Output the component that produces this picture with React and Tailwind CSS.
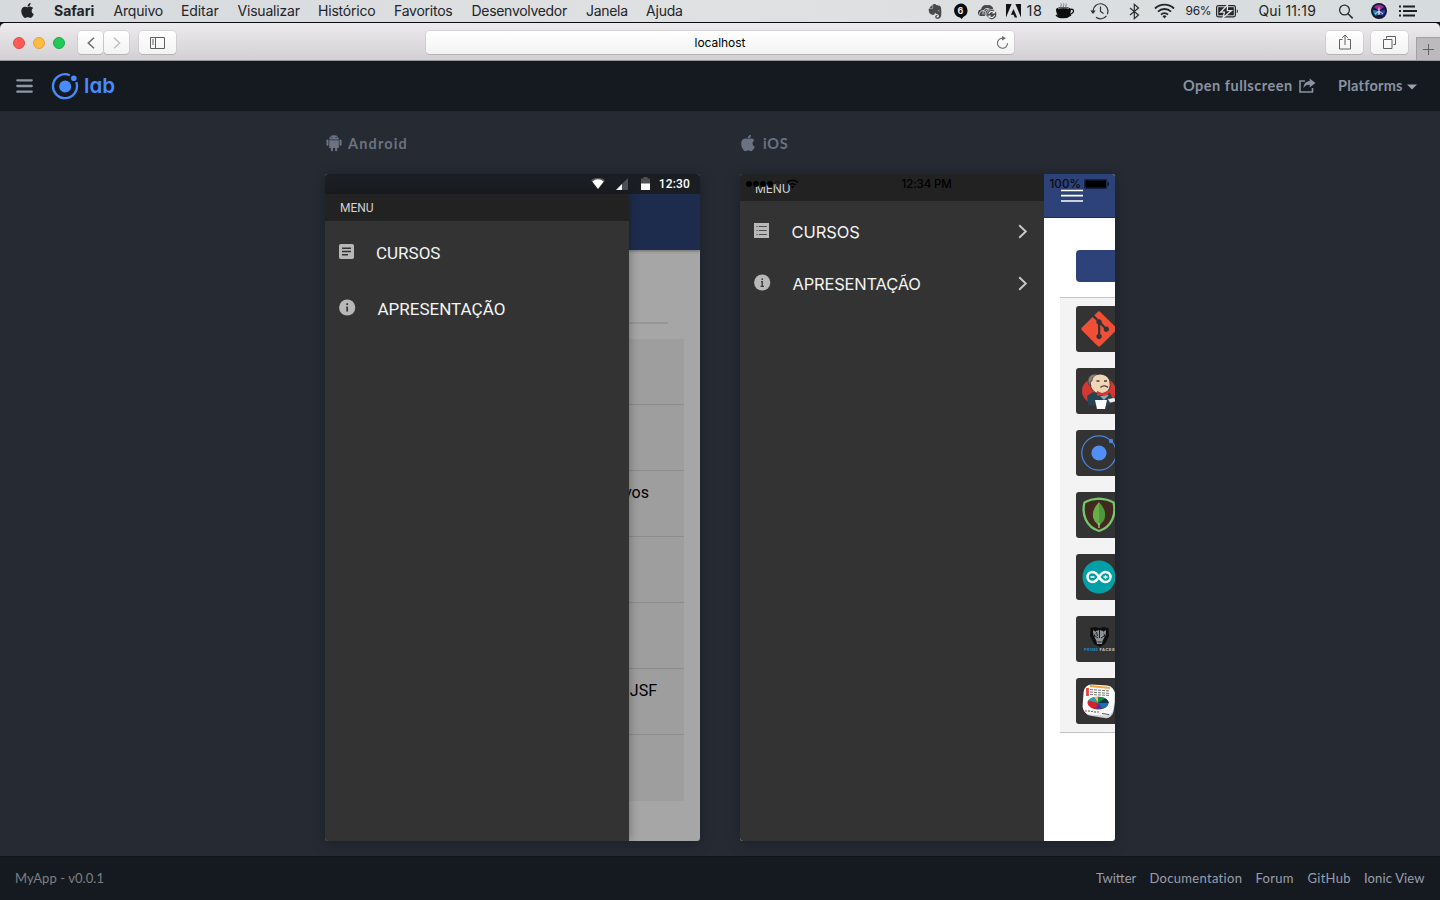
import React from "react";
import { FaApple, FaEvernote, FaGitAlt } from "react-icons/fa";
import { IoLogoAndroid, IoLogoApple } from "react-icons/io";

const menus = [
  ["Safari", "w-[59.5px] font-bold tracking-[0px]"],
  ["Arquivo", "w-[67.5px] tracking-[-0.2px]"],
  ["Editar", "w-[56.5px] tracking-[-0.1px]"],
  ["Visualizar", "w-[80.5px] tracking-[-0.2px]"],
  ["Histórico", "w-[76px] tracking-[-0.2px]"],
  ["Favoritos", "w-[77.5px] tracking-[-0.25px]"],
  ["Desenvolvedor", "w-[114.5px] tracking-[-0.3px]"],
  ["Janela", "w-[60px] tracking-[-0.3px]"],
  ["Ajuda", "w-[60px] tracking-[-0.2px]"],
];

function StatusIcons() {
  return (
    <div className="flex h-[22px] items-center">
      <FaEvernote className="mr-[10px] h-[17px] w-[16px] text-[#48494b]" />
      <svg className="mr-[9px] h-[18px] w-[15px]" viewBox="0 0 15 18">
        <path d="M7.5 1.5a7 7 0 0 1 3 13.3L8.7 17 7 15.4A7 7 0 0 1 7.500 1.500z" fill="#0b0c0e" />
        <text x="7.500" y="11.500" fontSize="9" fontWeight="700" textAnchor="middle" fill="#e6e7e9" fontFamily="Inter, sans-serif">6</text>
      </svg>
      <svg className="mr-[9px] h-[17px] w-[20px]" viewBox="0 0 20 17">
        <path d="M3.500 13a3.300 3.300 0 0 1 .5-6.500C4.500 3.500 7 1.500 10 2.200c3-.8 6 1 6.300 4.200v6.600z" fill="#45474a" />
        <path d="M2.500 11.500C2.500 7.500 7 6.500 8.500 9M6 11.500C5.500 6.500 9 4.500 12.500 6M8.500 13c-1-3 0-6 3-6.500" fill="none" stroke="#d9dcde" strokeWidth="1" />
        <circle cx="14.700" cy="11.500" r="5" fill="#45474a" stroke="#d9dcde" strokeWidth=".8" />
        <path d="M11.800 11a3 3 0 0 1 5.200-1.500M17.600 12a3 3 0 0 1-5.200 1.500M17.400 8v2h-2M12 15v-2h2" fill="none" stroke="#eceeef" strokeWidth="1.100" />
      </svg>
      <svg className="h-[14px] w-[15px]" viewBox="0 0 15 14">
        <path d="M0 0h5.600L0 13.500zM9.400 0H15v13.500zM7.500 5l3.700 8.500H8.700l-1.100-2.700H4.900z" fill="#111214" />
      </svg>
      <span className="ml-[6px] w-[28px] text-[14.500px] tracking-[.6px]">18</span>
      <svg className="mr-[15px] h-[18px] w-[20px]" viewBox="0 0 20 18">
        <path d="M6 5C5 3.500 7 3 6 1.500M8.500 5c-1-1.500 1-2 0-3.500M11 5c-1-1.500 1-2 0-3.500" fill="none" stroke="#77797c" strokeWidth="1" />
        <path d="M1 7.500c0-3.500 15-3.500 15 0 0 3.500-2 7-4 8h-7C3 14.500 1 11 1 7.500z" fill="#0b0c0e" />
        <path d="M3 6.800c2-1.300 9-1.300 11 0" stroke="#aeb1b4" strokeWidth=".8" fill="none" />
        <path d="M15.500 7.500c4-1.500 4.500 4-1.500 5M1 13c3 3.500 11 3.500 15 0" stroke="#0b0c0e" strokeWidth="1.300" fill="none" />
      </svg>
      <svg className="mr-[19px] h-[18px] w-[20px]" viewBox="0 0 20 18">
        <path d="M3 9a7.500 7.500 0 1 1 3 6.300" fill="none" stroke="#2f3134" strokeWidth="1.200" strokeDasharray="26 2 30" />
        <path d="M.3 8.500h5.400L3 12z" fill="#2f3134" />
        <path d="M10.500 4.500V9.500L13.500 11.500" fill="none" stroke="#2f3134" strokeWidth="1.200" />
      </svg>
      <svg className="mr-[14px] h-[17px] w-[11px]" viewBox="0 0 11 17">
        <path d="M1 5l8.500 7-4.200 3.700V1.300L9.500 5 1 12" fill="none" stroke="#2b2d30" strokeWidth="1.200" />
      </svg>
      <svg className="mr-[11px] h-[16px] w-[21px]" viewBox="0 0 21 16">
        <path d="M1 5.500a13.500 13.500 0 0 1 19 0M4 8.700a9.200 9.200 0 0 1 13 0M7 11.600a5 5 0 0 1 7 0" fill="none" stroke="#24262a" strokeWidth="1.900" />
        <path d="M10.500 15.500L8.500 13.300a2.800 2.800 0 0 1 4 0z" fill="#24262a" />
      </svg>
      <span className="w-[30px] text-[12px] tracking-[-0.3px]">96%</span>
      <svg className="mr-[20px] h-[13px] w-[23px]" viewBox="0 0 23 13">
        <rect x=".6" y=".6" width="18.800" height="11.300" rx="1.800" fill="none" stroke="#24262a" strokeWidth="1.200" />
        <rect x="2.200" y="2.200" width="15.600" height="8.100" fill="#24262a" />
        <path d="M11.500 0L4.500 7.200h4L7 12.800 15.500 5.600h-4.200z" fill="#24262a" stroke="#dfe2e4" strokeWidth="1.300" />
        <path d="M20.800 4.300c1.500.5 1.500 3.400 0 4z" fill="#24262a" />
      </svg>
      <span className="w-[79.500px] whitespace-nowrap text-[14px] tracking-[0.15px]">Qui 11:19</span>
      <svg className="mr-[17px] h-[15px] w-[16px]" viewBox="0 0 16 15">
        <circle cx="6.500" cy="6" r="4.900" fill="none" stroke="#2b2d30" strokeWidth="1.300" />
        <path d="M10 9.700l4.700 4.700" stroke="#2b2d30" strokeWidth="1.600" />
      </svg>
      <svg className="mr-[12px] h-[16px] w-[16px]" viewBox="0 0 16 16">
        <circle cx="8" cy="8" r="8" fill="#15163a" />
        <path d="M3 4a6.500 6.500 0 0 1 10 0L8 8z" fill="#a02896" />
        <path d="M2 7l6 1-3 5A7 7 0 0 1 2 7z" fill="#1590b4" />
        <path d="M14 7L8 8l3 5a7 7 0 0 0 3-6z" fill="#3049b4" />
        <path d="M8 4.500v3.500l4 3M8 8l-4 3M8 8l-1 4M8 8l1 4" stroke="#d5dcff" strokeWidth="1" fill="none" />
      </svg>
      <svg className="h-[12px] w-[18px]" viewBox="0 0 18 12">
        <path d="M0 1.500h2M0 6h2M0 10.500h2M4 1.500h12M4 6h14M4 10.500h12" stroke="#1d1f22" strokeWidth="1.800" />
      </svg>
    </div>
  );
}

function MenuBar() {
  return (
    <div className="flex h-[23px] items-start justify-between border-b border-[#0b0d10] bg-gradient-to-r from-[#d6dadd] via-[#e0e1e2] to-[#d6dcde] pr-[23px] pl-[20px] text-[14px] leading-[22px] text-[#222428]">
      <div className="flex h-[22px] items-center">
        <FaApple className="mr-[19px] mb-[2px] h-[17px] w-[15px]" />
        {menus.map(([name, cls]) => (
          <span key={name} className={"whitespace-nowrap " + cls}>{name}</span>
        ))}
      </div>
      <StatusIcons />
    </div>
  );
}

const toolButton = "flex h-[23px] items-center justify-center rounded-[4px] bg-gradient-to-b from-white to-[#f3f3f3] shadow-[0_0_0_0.5px_#c2c0c2,0_1px_0_#aaa8aa]";

function Toolbar() {
  return (
    <div className="bg-[#15191f]">
      <div className="flex h-[38px] items-start rounded-t-[5px] border-b border-[#989698] bg-gradient-to-b from-[#edebed] to-[#d3d0d3] pl-[13px]">
        <div className="flex w-[413px] items-center pt-[8px]">
          <div className="flex gap-[8px]">
            <div className="h-[12px] w-[12px] rounded-full border border-[#e14b4b] bg-[#fc5b57]" />
            <div className="h-[12px] w-[12px] rounded-full border border-[#e0a13c] bg-[#fdbc40]" />
            <div className="h-[12px] w-[12px] rounded-full border border-[#14ae46] bg-[#1fca57]" />
          </div>
          <div className={"ml-[13px] w-[25px] " + toolButton}>
            <svg className="h-[12px] w-[8px]" viewBox="0 0 8 12"><path d="M7 .8L1.300 6 7 11.200" fill="none" stroke="#6c6c6c" strokeWidth="1.500" /></svg>
          </div>
          <div className={"ml-px w-[25px] " + toolButton}>
            <svg className="h-[12px] w-[8px]" viewBox="0 0 8 12"><path d="M1 .8L6.700 6 1 11.200" fill="none" stroke="#bcbcbc" strokeWidth="1.300" /></svg>
          </div>
          <div className={"ml-[10px] w-[37px] " + toolButton}>
            <svg className="h-[12px] w-[15px]" viewBox="0 0 15 12"><path d="M.5.5h14v11H.5zM5.500.5v11M2 3h2M2 5h2M2 7h2" fill="none" stroke="#606060" /></svg>
          </div>
        </div>
        <div className={"mt-[8px] w-[588px] " + toolButton}>
          <span className="ml-auto pl-[18px] text-[12px] leading-[23px] tracking-[-0.05px] text-black">localhost</span>
          <svg className="mr-[5px] ml-auto h-[14px] w-[13px]" viewBox="0 0 13 14">
            <path d="M11.600 7.300a5.100 5.100 0 1 1-5-5.200" fill="none" stroke="#6b6b6b" strokeWidth="1.100" />
            <path d="M6 0l4 2.300L6 4.600z" fill="#6b6b6b" />
          </svg>
        </div>
        <div className="ml-auto flex items-start">
          <div className={"mt-[8px] w-[37px] " + toolButton}>
            <svg className="mb-[2px] h-[16px] w-[12px]" viewBox="0 0 12 16"><path d="M3.500 5.500h-3v9.500h11V5.500h-3M6 11V1M3.200 3.700L6 1l2.800 2.700" fill="none" stroke="#606060" /></svg>
          </div>
          <div className={"mt-[8px] mr-[8px] ml-[8px] w-[37px] " + toolButton}>
            <svg className="mb-px h-[13px] w-[13px]" viewBox="0 0 13 13"><path d="M.5 3.500h8.500v9H.5zM3.500 2.500v-2h9v8h-2" fill="none" stroke="#606060" /></svg>
          </div>
          <div className="mt-[14px] flex h-[23px] w-[24px] items-center justify-center border-t border-l border-[#a3a1a3] bg-[#bcbabc]">
            <svg className="h-[11px] w-[11px]" viewBox="0 0 11 11"><path d="M5.500 0v11M0 5.500h11" stroke="#646264" /></svg>
          </div>
        </div>
      </div>
    </div>
  );
}

function LabHeader() {
  return (
    <header className="flex h-[50px] items-center justify-between bg-[#151a21] pr-[23px] pl-[16px] font-['Lato',sans-serif] text-[14.500px] leading-[20px] font-bold text-[#8b92a0]">
      <div className="flex items-center">
        <svg className="h-[14px] w-[17px]" viewBox="0 0 17 14"><path d="M1.300 1.300h14.400M1.300 7h14.400M1.300 12.700h14.400" stroke="#9096a4" strokeWidth="2.300" strokeLinecap="round" /></svg>
        <svg className="ml-[18px] h-[28px] w-[28px]" viewBox="0 0 28 28">
          <path d="M18.800 3.200A12 12 0 1 0 25.300 10.200" fill="none" stroke="#4a8bfc" strokeWidth="2.300" />
          <circle cx="14.200" cy="14.500" r="6" fill="#4a8bfc" />
          <circle cx="22.800" cy="6.300" r="2.800" fill="#4a8bfc" />
        </svg>
        <span className="ml-[5px] font-['Inter',sans-serif] text-[20.500px] leading-[28px] font-semibold tracking-[0.1px] text-[#4a8bfc] [font-feature-settings:'cv11']">lab</span>
      </div>
      <div className="flex items-center whitespace-nowrap">
        <span className="mb-px w-[116px] tracking-[0.5px]">Open fullscreen</span>
        <svg className="mr-[22px] mb-[2px] h-[15px] w-[17px]" viewBox="0 0 17 15">
          <path d="M6 3H1v11h12.500v-4" fill="none" stroke="#8b92a0" strokeWidth="1.600" />
          <path d="M10.700.5L16.500 5l-5.800 4.500V6.700C7.500 6.500 6 7.700 4.500 10c.2-4 2.500-6.600 6.200-6.900z" fill="#8b92a0" />
        </svg>
        <span className="mb-px w-[69px] tracking-[0.25px]">Platforms</span>
        <svg className="mt-[2px] h-[6px] w-[10px]" viewBox="0 0 10 6"><path d="M0 .5h10L5 5.500z" fill="#9aa0ad" /></svg>
      </div>
    </header>
  );
}

function AndroidPhone() {
  const rows = ["", "", "vos", "", "", "JSF", ""];
  return (
    <div className="h-[667px] w-[375px] overflow-hidden rounded-[3px] bg-[#a6a6a6] font-['Roboto',sans-serif] shadow-[0_2px_14px_rgba(0,0,0,0.25)]">
      <div className="flex h-[20px] items-center justify-end bg-[#1a1e22] pr-[10px] text-white">
        <svg className="mr-[11px] mb-px h-[11px] w-[14px]" viewBox="0 0 14 11">
          <path d="M0 2.300a11 11 0 0 1 14 0L7 11z" fill="#55585c" />
          <path d="M1.300 3.500a9.500 9.500 0 0 1 11.400 0L7 11z" fill="#fff" />
        </svg>
        <svg className="mr-[13px] h-[12px] w-[12px]" viewBox="0 0 12 12"><path d="M12 0v12H0z" fill="#4e5154" /><path d="M6 6v6H0z" fill="#fff" /></svg>
        <svg className="mr-[9px] mb-px h-[13px] w-[9px]" viewBox="0 0 9 13"><path d="M0 1.500h2.500V0h4v1.500H9V13H0z" fill="#4e5154" /><path d="M0 6.500h9V13H0z" fill="#fff" /></svg>
        <span className="text-[12px] leading-[20px] font-medium tracking-[0.15px]">12:30</span>
      </div>
      <div className="flex h-[647px]">
        <div className="relative z-10 w-[304px] shrink-0 bg-[#333] text-[#f4f4f4] shadow-[0_0_10px_rgba(0,0,0,0.35)]">
          <div className="h-[27px] bg-[#222] pl-[15px] text-[12px] leading-[28px] text-[#d3d3d3]">MENU</div>
          <div className="mt-[4px] flex h-[56px] items-center pl-[14px]">
            <svg className="mr-[22px] mb-[3px] h-[15px] w-[15px]" viewBox="0 0 15 15"><rect width="15" height="15" rx="1.800" fill="#b8b8b8" /><path d="M3 4.200h9M3 7.500h9M3 10.800h6" stroke="#333" strokeWidth="1.600" /></svg>
            <span className="pt-[2px] text-[17px]">CURSOS</span>
          </div>
          <div className="flex h-[56px] items-center pl-[14px]">
            <svg className="mr-[21.500px] mb-[3px] h-[17px] w-[17px]" viewBox="0 0 17 17"><circle cx="8.200" cy="8.500" r="8.100" fill="#b8b8b8" /><path d="M8.200 4.200v1.800M8.200 7.500v5" stroke="#333" strokeWidth="1.700" /></svg>
            <span className="pt-[2px] text-[17px]">APRESENTAÇÃO</span>
          </div>
        </div>
        <div className="flex w-[71px] flex-col overflow-hidden">
          <div className="h-[56px] shrink-0 bg-[#1d2b4d] shadow-[0_1px_3px_rgba(0,0,0,0.35)]" />
          <div className="mt-[72px] h-[2px] w-[39px] shrink-0 bg-[#979797]" />
          <div className="mt-[15px] w-[55px] bg-[#9e9e9e]">
            {rows.map((label, i) => (
              <div key={i} className={"flex h-[66px] justify-end pt-[10px] text-[16px] leading-[24px] text-black " + (i < 6 ? "border-b border-[#8c8c8c] " : "") + (i === 2 ? "pr-[35px]" : "pr-[27px]")}>
                <span className="whitespace-nowrap">{label}</span>
              </div>
            ))}
          </div>
        </div>
      </div>
    </div>
  );
}

const Git = () => <FaGitAlt className="h-[40px] w-[36px] text-[#f04e37]" />;

const Jenkins = () => (
  <svg className="h-[38px] w-[36px]" viewBox="0 0 36 38">
    <ellipse cx="18" cy="19" rx="17" ry="14" fill="#d33833" />
    <path d="M7 33l-1-9 6-4 9 3 8-2 3 6-2 5-8 3z" fill="#254553" />
    <path d="M9 12C8 5 12 2 18 2c7 0 11 4 11 9 1 6-3 10-8 11C14 22 10 18 9 12z" fill="#f0d6b7" stroke="#2b2522" strokeWidth=".8" />
    <path d="M8 13C5 6 9 1 18 2c-5 1-7 4-7 7l-2 1 1 4z" fill="#85807c" stroke="#2b2522" strokeWidth=".6" />
    <path d="M15.500 9h3M23 9h3M19.500 15.500c2-2.500 6-2 7.500 0" stroke="#4a3f38" strokeWidth="1.300" fill="none" />
    <path d="M16 19l5 2 6-2v5l-6-1-5 1z" fill="#d33833" />
    <path d="M19 24l4 4 5-5z" fill="#8ea9b5" />
    <path d="M14 28h12l-2 9h-8z" fill="#fff" />
    <path d="M26.500 27l7-1.500 1.500 4-6 1.500z" fill="#eee" stroke="#333" strokeWidth=".5" />
  </svg>
);

const Ionic = () => (
  <svg className="h-[36px] w-[36px]" viewBox="0 0 36 36">
    <circle cx="18" cy="18" r="17.200" fill="none" stroke="#4a86dc" strokeWidth="1.200" />
    <circle cx="18" cy="18" r="7.600" fill="#518ff5" />
    <circle cx="30" cy="6" r="2.200" fill="#4a86dc" />
  </svg>
);

const Mongo = () => (
  <svg className="h-[36px] w-[36px]" viewBox="0 0 36 36">
    <path d="M18 1.700C24 2 29 3.500 32.500 5.500 35.500 17 31 30 18 34 5 30 .5 17 3.500 5.500 7 3.500 12 2 18 1.700z" fill="#41291f" stroke="#76c66c" strokeWidth="2.300" />
    <path d="M18 5Q8.500 15 13.500 24l4.500 5z" fill="#6cac48" />
    <path d="M18 5Q27.500 15 22.500 24L18 29z" fill="#4d9a3c" />
    <path d="M18 26v5" stroke="#c2bfbf" strokeWidth="1.200" />
  </svg>
);

const Arduino = () => (
  <svg className="h-[34px] w-[34px]" viewBox="0 0 34 34">
    <circle cx="17" cy="17" r="16.500" fill="#00a0a6" />
    <path d="M17 17C14.500 13 12.500 12 10.500 12a5 5 0 0 0 0 10c2 0 4-1 6.500-5s4.500-5 6.500-5a5 5 0 0 1 0 10c-2 0-4-1-6.500-5z" fill="none" stroke="#fff" strokeWidth="2.500" />
    <path d="M8.500 17h4M21.500 17h4M23.500 15v4" stroke="#fff" strokeWidth="1.300" />
  </svg>
);

const PrimeFaces = () => (
  <svg className="h-[26px] w-[32px]" viewBox="0 0 32 26">
    <path d="M7.500 2l5-1 3 1h2l3-1 5 1 .5 8-4 8-5 3-6-3-4-8z" fill="#0c0d0e" />
    <path d="M10 4l3 2-2.500 4zM23 4l-3 2 2.500 4zM13 5l3.500-1 3.500 1 1.500 6-2 4-.5 3h-5l-.5-3-2-4z" fill="#8f9295" />
    <path d="M16.500 4v8M12 10l3 2M21 10l-3 2M14.500 16h4M13.500 6l1 4" stroke="#1b1c1d" strokeWidth="1" />
    <text x="1" y="25" fontSize="4" fontWeight="700" textLength="14" fill="#2084c8" fontFamily="Inter, sans-serif">PRIME</text>
    <text x="16.500" y="25" fontSize="4" fontWeight="700" textLength="15" fill="#c9c9c9" fontFamily="Inter, sans-serif">FACES</text>
  </svg>
);

const Report = () => (
  <svg className="h-[36px] w-[36px]" viewBox="0 0 36 36">
    <rect x="4" y="4" width="30" height="30" rx="8" fill="#d4d4d4" transform="rotate(9 18 18)" />
    <rect x="2" y="2" width="31" height="30" rx="8" fill="#fafafa" transform="rotate(4 18 18)" />
    <path d="M9 3l20 2" stroke="#f2a43a" strokeWidth="1.800" />
    <path d="M6.500 5v8" stroke="#e2453d" strokeWidth="2.800" />
    <path d="M9 6.500l20 1.500M9 9l20 1.500M9 11.500l20 1" stroke="#77787a" strokeWidth="1" strokeDasharray="3 1" />
    <ellipse cx="17" cy="20" rx="10.500" ry="6.300" fill="#d2232a" />
    <path d="M17 20V13.700c7 0 10.500 3 10.500 6.300z" fill="#16884a" />
    <path d="M17 20l7-4.500c2.500 1.200 3.500 3 3.500 4.500z" fill="#12324a" />
    <path d="M17 20h10.500c0 3-3 5-6 5.700z" fill="#1d6fb0" />
    <path d="M17 20l4.500 5.700c-2 .6-4 .7-6.500.5z" fill="#373ca0" />
    <path d="M17 20l-4-6c1-.2 2.500-.3 4-.3z" fill="#f3c33b" />
    <path d="M17 20L7.500 17.500c1-1.800 3-3 5.500-3.500z" fill="#2a9fb0" />
    <path d="M4 28h2M10 28.500h2M16 29h2" stroke="#e2453d" strokeWidth="1.200" />
    <path d="M7 28h2M13 29h2M21 30.500l7 1" stroke="#555" strokeWidth="1" />
  </svg>
);

const thumbs = [Git, Jenkins, Ionic, Mongo, Arduino, PrimeFaces, Report];

const Chevron = () => (
  <svg className="mr-[16px] ml-auto h-[15px] w-[10px]" viewBox="0 0 10 15"><path d="M1.200 1.200l6.600 6.300-6.600 6.300" fill="none" stroke="#c9c9cb" strokeWidth="1.900" /></svg>
);

function IosPhone() {
  return (
    <div className="relative flex h-[667px] w-[375px] overflow-hidden rounded-[3px] bg-white font-['Inter',sans-serif] shadow-[0_2px_14px_rgba(0,0,0,0.25)]">
      <div className="relative z-10 w-[304px] shrink-0 bg-[#333] text-[#f4f4f4]">
        <div className="h-[27px] bg-[#222] pl-[15px] text-[12px] leading-[29px] tracking-[-0.15px] text-[#d3d3d3]">MENU</div>
        <div className="mt-[4px] flex h-[52px] items-center pl-[14px]">
          <svg className="mr-[22.500px] mb-px h-[15px] w-[15px]" viewBox="0 0 15 15"><path d="M0 0h15v15H0z" fill="#b8b8b8" /><path d="M2.500 3.500h1.200M2.500 7.500h1.200M2.500 11.500h1.200M4.800 3.500h8M4.800 7.500h8M4.800 11.500h8" stroke="#4a4a4a" strokeWidth="1" /></svg>
          <span className="pt-[2px] text-[16.500px] tracking-[-0.1px]">CURSOS</span>
          <Chevron />
        </div>
        <div className="flex h-[52px] items-center pl-[14px]">
          <svg className="mr-[21.500px] mb-px h-[17px] w-[17px]" viewBox="0 0 17 17"><circle cx="8.200" cy="8.500" r="8.100" fill="#b8b8b8" /><path d="M8.200 4.200v1.800M7 7.600h1.200v4.600M6.600 12.300h3.300" fill="none" stroke="#333" strokeWidth="1.300" /></svg>
          <span className="pt-[2px] text-[16.500px] tracking-[-0.2px]">APRESENTAÇÃO</span>
          <Chevron />
        </div>
      </div>
      <div className="flex w-[71px] flex-col overflow-hidden">
        <div className="flex h-[44px] shrink-0 border-b border-[#1f2d52] bg-[#2d4278] pt-[15px] pl-[17px]">
          <svg className="h-[14px] w-[22px]" viewBox="0 0 22 14"><path d="M0 1.500h22M0 6.700h22M0 12h22" stroke="#fff" strokeWidth="1.700" /></svg>
        </div>
        <div className="mt-[32px] ml-[32px] h-[32px] shrink-0 rounded-l-[4px] bg-[#2d4278]" />
        <div className="mt-[15px] ml-[16px] flex h-[436px] shrink-0 flex-col gap-[16px] border-y border-[#c4c3c7] bg-[#f3f3f3] pt-[8px] pl-[16px]">
          {thumbs.map((Logo, i) => (
            <div key={i} className="flex h-[46px] w-[46px] shrink-0 items-center justify-center rounded-[3px] bg-[#333]">
              <Logo />
            </div>
          ))}
        </div>
      </div>
      <div className="absolute inset-x-0 top-0 z-20 flex h-[20px] items-center pr-[6px] pl-[6px] text-[11.500px] font-semibold text-black">
        <svg className="h-[10px] w-[54px]" viewBox="0 0 54 10">
          <circle cx="3" cy="5" r="3" /><circle cx="10" cy="5" r="3" /><circle cx="17" cy="5" r="3" /><circle cx="24" cy="5" r="3" />
          <circle cx="31" cy="5" r="2.600" fill="none" stroke="#111" strokeWidth=".6" />
          <path d="M41 3.500a8 8 0 0 1 11 0M43.300 6a5 5 0 0 1 6.400 0" fill="none" stroke="#000" strokeWidth="1.500" /><path d="M46.500 9.500l-1.700-2a3 3 0 0 1 3.400 0z" />
        </svg>
        <span className="ml-[101.500px] w-[148px] pt-[2px] font-medium tracking-[-0.1px] whitespace-nowrap">12:34 PM</span>
        <span className="w-[34.500px] pt-[2px] font-medium tracking-[0.1px] text-[#080b14]">100%</span>
        <svg className="h-[10px] w-[25px]" viewBox="0 0 25 10"><rect x=".4" y=".4" width="22.500" height="9.200" rx="1.500" fill="none" stroke="#0a0f20" strokeWidth=".7" /><rect x="1.300" y="1.300" width="20.700" height="7.400" rx=".8" /><path d="M23.600 3.300c1.600.3 1.600 3.100 0 3.400z" /></svg>
      </div>
    </div>
  );
}

const platformTitle = "flex h-[20px] items-center font-['Lato',sans-serif] text-[14.500px] leading-[20px] font-bold text-[#6b7280]";

export default function App() {
  return (
    <div className="flex h-[900px] w-[1440px] flex-col overflow-hidden bg-[#252a33] font-['Inter',sans-serif]">
      <MenuBar />
      <Toolbar />
      <LabHeader />
      <main className="flex h-[745px] justify-center gap-[40px] pt-[22px]">
        <section className="flex flex-col gap-[21px]">
          <div className={platformTitle}>
            <IoLogoAndroid className="mr-[3.500px] -ml-[2.500px] h-[22px] w-[22px]" />
            <span className="pt-[2px] tracking-[1.150px]">Android</span>
          </div>
          <AndroidPhone />
        </section>
        <section className="flex flex-col gap-[21px]">
          <div className={platformTitle}>
            <IoLogoApple className="mr-[4px] -ml-[3px] h-[22px] w-[22px]" />
            <span className="pt-[2px] tracking-[0.700px]">iOS</span>
          </div>
          <IosPhone />
        </section>
      </main>
      <footer className="flex h-[44px] items-center justify-between border-t border-[#11151a] bg-[#151a21] pr-[15px] pl-[15px] font-['Lato',sans-serif] text-[13px]">
        <span className="pt-px tracking-[0.07px] text-[#7d7f82]">MyApp - v0.0.1</span>
        <nav className="flex pt-px whitespace-nowrap text-[#9a9fab]">
          <span className="w-[53.500px] tracking-[0px]">Twitter</span>
          <span className="w-[106px] tracking-[0.3px]">Documentation</span>
          <span className="w-[52px] tracking-[0.3px]">Forum</span>
          <span className="w-[56.500px] tracking-[0.3px]">GitHub</span>
          <span className="w-[61px] tracking-[0.15px]">Ionic View</span>
        </nav>
      </footer>
    </div>
  );
}
